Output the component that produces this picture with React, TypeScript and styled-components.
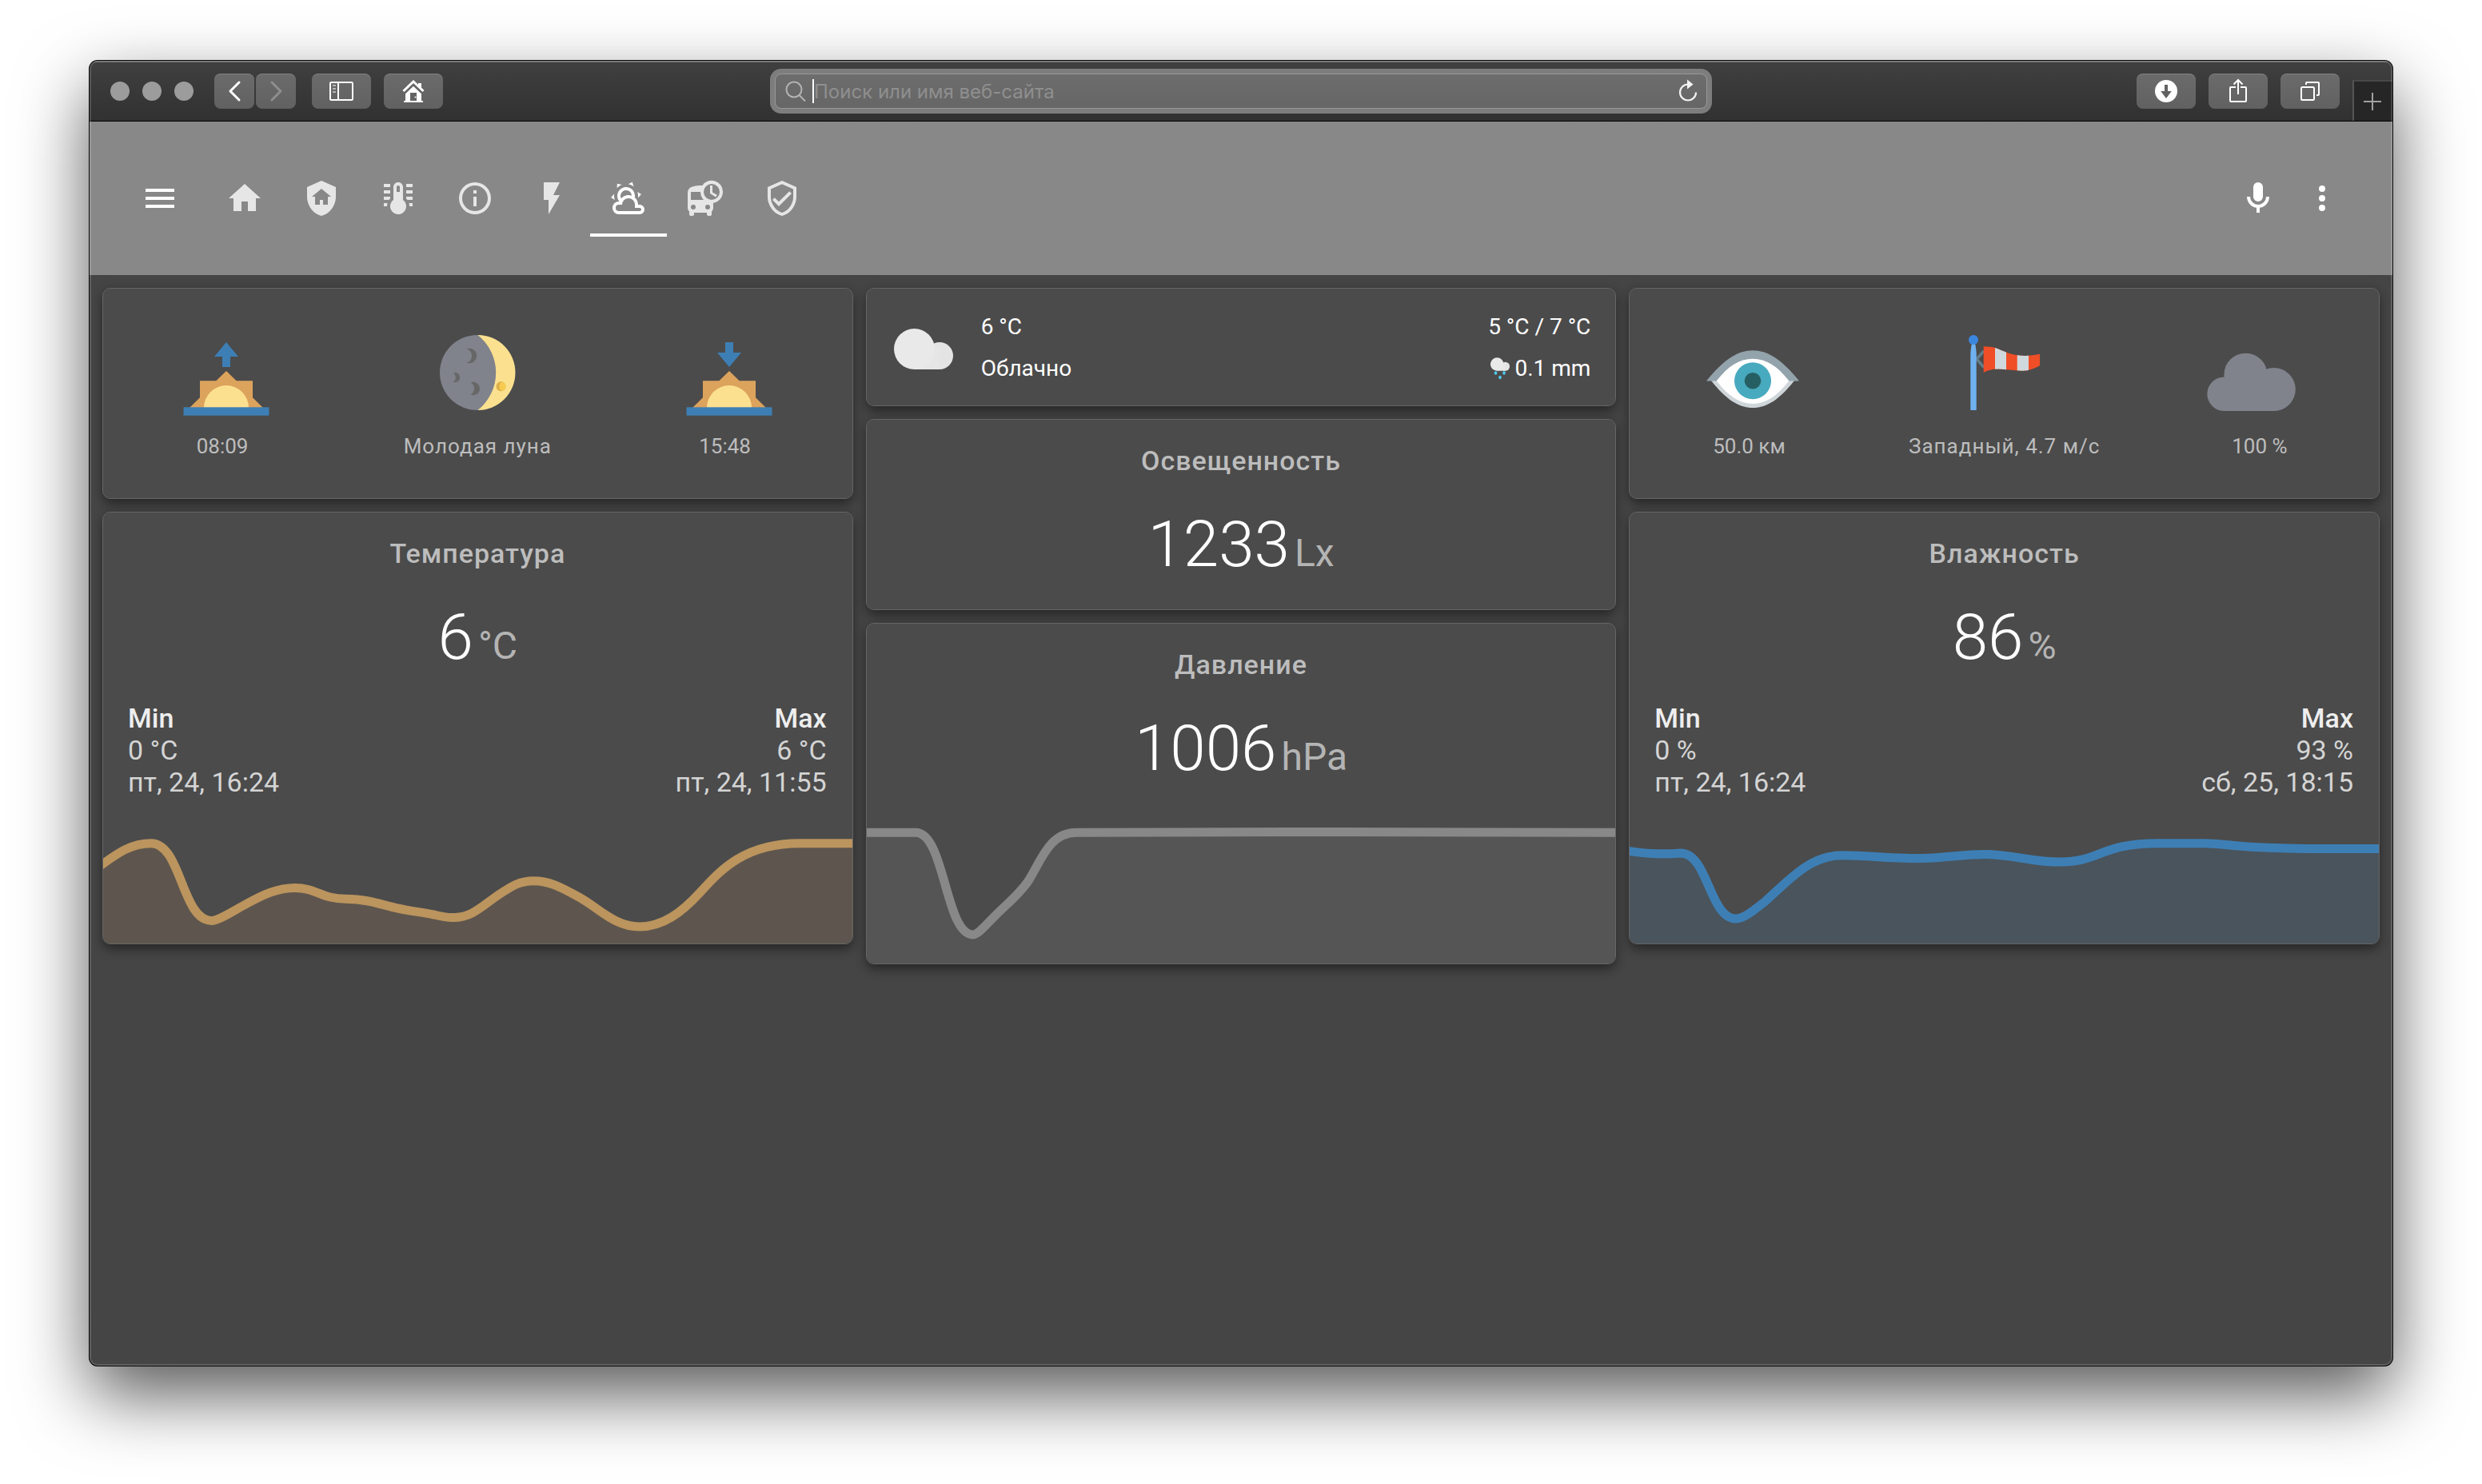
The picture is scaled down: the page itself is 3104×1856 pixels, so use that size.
import React, { useState } from "react";
import styled, { createGlobalStyle } from "styled-components";

const GlobalStyle = createGlobalStyle`
  *, *::before, *::after { box-sizing: border-box; }
  body {
    margin: 0;
    background: #ffffff;
    font-family: Roboto, "Noto Sans", sans-serif;
    -webkit-font-smoothing: antialiased;
  }
  button, input { font: inherit; }
  button { border: 0; padding: 0; background: none; color: inherit; cursor: pointer; }
  svg { display: block; flex: none; }
  h2, p { margin: 0; font: inherit; }
`;

/* ---------- window ---------- */

const Desktop = styled.div`
  min-height: 100vh;
  padding: 76px 112px 148px;
  display: flex;
`;

const BrowserWindow = styled.div`
  position: relative;
  flex: 1;
  min-width: 0;
  display: flex;
  flex-direction: column;
  overflow: hidden;
  border-radius: 10px;
  background: #454545;
  box-shadow: 0 0 0 1px #0a0a0a, 0 36px 88px rgba(0, 0, 0, 0.66);

  &::after {
    content: "";
    position: absolute;
    inset: 0;
    border-radius: inherit;
    box-shadow: inset 0 0 0 2px rgba(255, 255, 255, 0.14);
    pointer-events: none;
  }
`;

const Toolbar = styled.div`
  height: 76px;
  display: grid;
  grid-template-columns: 1fr minmax(0, 1178px) 1fr;
  align-items: center;
  border-bottom: 1px solid #000000;
  background: linear-gradient(#404040, #313131);
  box-shadow: inset 0 2px 0 rgba(255, 255, 255, 0.18);
`;

const ToolGroup = styled.div<{ $end?: boolean }>`
  height: 100%;
  display: flex;
  align-items: center;
  justify-content: ${(p) => (p.$end ? "flex-end" : "flex-start")};
  gap: 16px;
  padding-left: ${(p) => (p.$end ? 0 : 26)}px;
`;

const Lights = styled.div`
  display: flex;
  gap: 16px;
  margin-right: 10px;
`;

const Light = styled.button`
  width: 24px;
  height: 24px;
  border-radius: 50%;
  background: #9c9c9c;
`;

const History = styled.div`
  display: flex;
  gap: 2px;
  margin-right: 4px;
`;

const ToolButton = styled.button<{ $narrow?: boolean }>`
  width: ${(p) => (p.$narrow ? 50 : 74)}px;
  height: 44px;
  border-radius: 8px;
  color: #ffffff;
  background: linear-gradient(#6b6b6b, #616161);
  box-shadow: inset 0 1px 0 rgba(255, 255, 255, 0.16);

  &:disabled { color: #8e8e8e; }
`;

const NewTab = styled.button`
  align-self: flex-end;
  width: 50px;
  height: 51px;
  padding-right: 2px;
  display: grid;
  place-items: center;
  color: #a0a0a0;
  background: #262626;
  border-top: 2px solid #484848;
  border-left: 2px solid #555555;
`;

const AddressRing = styled.div`
  padding: 6px;
  border-radius: 14px;
  background: #7d7d7d;
`;

const AddressBar = styled.label`
  height: 44px;
  display: flex;
  align-items: center;
  gap: 8px;
  padding: 0 9px 0 12px;
  border: 1px solid #989898;
  border-radius: 8px;
  background: linear-gradient(#6d6d6d, #666666);
  color: #b4b4b4;
`;

const AddressText = styled.span`
  flex: 1;
  min-width: 0;
  display: flex;
  align-items: center;
`;

const Caret = styled.span`
  width: 2px;
  height: 30px;
  background: #ffffff;
`;

const AddressInput = styled.input`
  flex: 1;
  min-width: 0;
  padding: 2px 0 0;
  border: 0;
  outline: 0;
  background: none;
  color: #ffffff;
  font-family: Inter, Roboto, sans-serif;
  font-size: 24px;
  line-height: 32px;

  &::placeholder { color: #8f8f8f; opacity: 1; }
`;

const Reload = styled.button`
  color: #f2f2f2;
`;

/* ---------- dashboard header ---------- */

const Header = styled.header`
  display: flex;
  align-items: center;
  padding: 48px 64px;
  background: #888888;
  color: #ffffff;
`;

const IconButton = styled.button`
  width: 48px;
  height: 48px;
`;

const Tabs = styled.nav`
  flex: 1;
  display: flex;
  margin-left: 34px;
`;

const Tab = styled.button<{ $active: boolean }>`
  width: 96px;
  height: 96px;
  display: grid;
  place-items: center;
  color: ${(p) => (p.$active ? "#ffffff" : "#e6e6e6")};
  box-shadow: ${(p) => (p.$active ? "inset 0 -4px 0 #ffffff" : "none")};
`;

const HeaderActions = styled.div`
  display: flex;
  gap: 32px;
`;

/* ---------- cards ---------- */

const Board = styled.main`
  display: grid;
  grid-template-columns: repeat(3, minmax(0, 1fr));
  align-items: start;
  gap: 16px;
  padding: 16px;
`;

const Column = styled.div`
  display: flex;
  flex-direction: column;
  gap: 16px;
`;

const Card = styled.section`
  overflow: hidden;
  border: 1px solid #666666;
  border-radius: 10px;
  background: #4b4b4b;
  background-clip: padding-box;
  box-shadow: 0 8px 14px -2px rgba(0, 0, 0, 0.36), 0 2px 14px rgba(0, 0, 0, 0.18);
`;

const Glance = styled(Card)`
  display: grid;
  grid-template-columns: repeat(3, minmax(0, 1fr));
  column-gap: 6px;
  padding: 41px 0 49px;
`;

const GlanceItem = styled.div`
  display: flex;
  flex-direction: column;
  align-items: center;
  gap: 12px;
`;

const GlanceLabel = styled.p<{ $side: "start" | "center" | "end" }>`
  padding-right: ${(p) => (p.$side === "start" ? 10 : 0)}px;
  padding-left: ${(p) => (p.$side === "end" ? 10 : 0)}px;
  font-size: 26px;
  line-height: 32px;
  letter-spacing: ${(p) => (p.$side === "center" ? 1 : 0)}px;
  color: #bdbdbd;
`;

const Forecast = styled(Card)`
  display: flex;
  align-items: center;
  gap: 32px;
  padding: 22px 31px 20px;
  font-size: 28px;
  line-height: 52px;
  color: #ffffff;
`;

const ForecastText = styled.div<{ $end?: boolean }>`
  flex: ${(p) => (p.$end ? "none" : 1)};
  text-align: ${(p) => (p.$end ? "right" : "left")};
`;

const Rain = styled.p`
  display: flex;
  align-items: center;
  justify-content: flex-end;
  gap: 6px;
`;

const SensorHead = styled.div`
  padding: 31px 0 41px;
  text-align: center;
`;

const SensorName = styled.h2`
  font-size: 34px;
  font-weight: 500;
  line-height: 40px;
  letter-spacing: 1px;
  color: #bdbdbd;
`;

const SensorState = styled.p`
  display: flex;
  justify-content: center;
  align-items: baseline;
  gap: 6px;
  margin-top: 45px;
  font-size: 80px;
  font-weight: 300;
  line-height: 80px;
  color: #ffffff;
`;

const Unit = styled.span`
  font-size: 48px;
  font-weight: 400;
  line-height: 48px;
  color: #b4b4b4;
`;

const Extrema = styled.div`
  display: flex;
  justify-content: space-between;
  padding: 0 32px 2px 31px;
  font-size: 34px;
  line-height: 40px;
  color: #d4d4d4;
`;

const Extremum = styled.div<{ $end?: boolean }>`
  text-align: ${(p) => (p.$end ? "right" : "left")};
`;

const ExtremumName = styled.p`
  font-weight: 500;
  color: #eeeeee;
`;

const ChartSvg = styled.svg`
  width: 100%;
`;

/* ---------- icons ---------- */

const Mdi = ({ d }: { d: string }) => (
  <svg width="48" height="48" viewBox="0 0 24 24" fill="currentColor" fillRule="evenodd" aria-hidden="true">
    <path d={d} />
  </svg>
);

const menuPath = "M3,6H21V8H3V6M3,11H21V13H3V11M3,16H21V18H3V16Z";
const micPath =
  "M12,2A3,3 0 0,1 15,5V11A3,3 0 0,1 12,14A3,3 0 0,1 9,11V5A3,3 0 0,1 12,2M19,11C19,14.53 16.39,17.44 13,17.93V21H11V17.93C7.61,17.44 5,14.53 5,11H7A5,5 0 0,0 12,16A5,5 0 0,0 17,11H19Z";
const dotsPath =
  "M12,16A2,2 0 0,1 14,18A2,2 0 0,1 12,20A2,2 0 0,1 10,18A2,2 0 0,1 12,16M12,10A2,2 0 0,1 14,12A2,2 0 0,1 12,14A2,2 0 0,1 10,12A2,2 0 0,1 12,10M12,4A2,2 0 0,1 14,6A2,2 0 0,1 12,8A2,2 0 0,1 10,6A2,2 0 0,1 12,4Z";

const tabs = [
  { label: "Дом", d: "M10,20V14H14V20H19V12H22L12,3L2,12H5V20H10Z" },
  {
    label: "Охрана",
    d: "M11,13H13V16H16V11H18L12,6L6,11H8V16H11V13M12,1L21,5V11C21,16.55 17.16,21.74 12,23C6.84,21.74 3,16.55 3,11V5L12,1Z",
  },
  {
    label: "Климат",
    d: "M17 3H21V5H17V3M17 7H21V9H17V7M17 11H21V13H17.75L17 12.1V11M21 15V17H19C19 16.31 18.9 15.63 18.71 15H21M3 3H7V5H3V3M3 7H7V9H3V7M3 11H7V12.1L6.25 13H3V11M3 15H5.29C5.1 15.63 5 16.31 5 17H3V15M15 13V5C15 3.34 13.66 2 12 2S9 3.34 9 5V13C6.79 14.66 6.34 17.79 8 20S12.79 22.66 15 21 17.66 16.21 16 14C15.72 13.62 15.38 13.28 15 13M12 4C12.55 4 13 4.45 13 5V8H11V5C11 4.45 11.45 4 12 4Z",
  },
  {
    label: "Информация",
    d: "M11,9H13V7H11V9M12,20C7.59,20 4,16.41 4,12C4,7.59 7.59,4 12,4C16.41,4 20,7.59 20,12C20,16.41 16.41,20 12,20M12,2A10,10 0 0,0 2,12A10,10 0 0,0 12,22A10,10 0 0,0 22,12A10,10 0 0,0 12,2M11,17H13V11H11V17Z",
  },
  { label: "Энергия", d: "M7,2V13H10V22L17,10H13L17,2H7Z" },
  {
    label: "Погода",
    d: "M12.74,5.47C15.1,6.5 16.35,9.03 15.92,11.46C17.19,12.56 18,14.19 18,16V16.17C18.31,16.06 18.65,16 19,16A3,3 0 0,1 22,19A3,3 0 0,1 19,22H6A4,4 0 0,1 2,18A4,4 0 0,1 6,14H6.27C5,12.45 4.6,10.24 5.5,8.26C6.72,5.5 9.97,4.24 12.74,5.47M11.93,7.3C10.16,6.5 8.09,7.31 7.31,9.07C6.85,10.09 6.93,11.22 7.41,12.13C8.5,10.83 10.16,10 12,10C12.7,10 13.38,10.12 14,10.34C13.94,9.06 13.18,7.86 11.93,7.3M13.55,3.64C13,3.4 12.45,3.23 11.88,3.12L14.37,1.82L15.27,4.71C14.76,4.29 14.19,3.93 13.55,3.64M6.09,4.44C5.6,4.79 5.17,5.19 4.8,5.63L4.91,2.82L7.87,3.5C7.25,3.71 6.65,4.03 6.09,4.44M18,9.71C17.91,9.12 17.78,8.55 17.59,8L19.97,9.5L17.92,11.73C18.03,11.08 18.05,10.4 18,9.71M3.04,11.3C3.11,11.9 3.24,12.47 3.43,13L1.06,11.5L3.1,9.28C3,9.93 2.97,10.61 3.04,11.3M19,18H16V16A4,4 0 0,0 12,12A4,4 0 0,0 8,16H6A2,2 0 0,0 4,18A2,2 0 0,0 6,20H19A1,1 0 0,0 20,19A1,1 0 0,0 19,18Z",
  },
  {
    label: "Транспорт",
    d: "M10.2 4C5.6 4 1 4.4 1 8.5V18C1 18.9 1.4 19.7 2 20.2V22C2 22.6 2.4 23 3 23H4C4.6 23 5 22.6 5 22V21H13V22C13 22.6 13.4 23 14 23H15C15.6 23 16 22.6 16 22V20.2C16.6 19.7 17 18.9 17 18V14.9C20.4 14.4 23 11.5 23 8A7 7 0 0 0 10.2 4ZM4.5 19A1.5 1.5 0 1 1 4.5 16A1.5 1.5 0 0 1 4.5 19ZM13.5 19A1.5 1.5 0 1 1 13.5 16A1.5 1.5 0 0 1 13.5 19ZM3 8H9C9 10 9.8 11.7 11 13H3V8ZM16 13A5 5 0 1 1 16 3A5 5 0 0 1 16 13ZM15 4H16.5V8.2L19.4 9.9L18.6 11.2L15 9Z",
  },
  {
    label: "Безопасность",
    d: "M21,11C21,16.55 17.16,21.74 12,23C6.84,21.74 3,16.55 3,11V5L12,1L21,5V11M12,21C15.75,20 19,15.54 19,11.22V6.3L12,3.18L5,6.3V11.22C5,15.54 8.25,20 12,21M10,17L6,13L7.41,11.59L10,14.17L16.59,7.58L18,9L10,17Z",
  },
];

const Chevron = ({ points }: { points: string }) => (
  <svg width="50" height="44" fill="none" stroke="currentColor" strokeWidth="3" strokeLinecap="round" strokeLinejoin="round">
    <polyline points={points} />
  </svg>
);

const SidebarIcon = () => (
  <svg width="74" height="44" fill="none" stroke="#fff" strokeWidth="2">
    <rect x="23" y="11" width="28" height="22" rx="1.5" />
    <path d="M33 11V33" />
    <path d="M26 15H30M26 19H30M26 23H30" stroke="#b5b5b5" />
  </svg>
);

const SafariHomeIcon = () => (
  <svg width="74" height="44" fill="#fff">
    <path d="M37 13.5L47 23.5V34H49V36H25V34H27V23.5Z" />
    <path d="M33 24H41V34H33Z" fill="#626262" />
    <circle cx="39.5" cy="29.5" r="1" />
    <path d="M26 23.5L37 13L48 23.5" fill="none" stroke="#656565" strokeWidth="4" />
    <path d="M43 12H47V19L43 15Z" />
    <path d="M24.5 22L37 10L49.5 22" fill="none" stroke="#fff" strokeWidth="3" />
  </svg>
);

const DownloadIcon = () => (
  <svg width="74" height="44">
    <circle cx="37" cy="22" r="14" fill="#fff" />
    <path d="M35 14H39V22H43.8L37 31L30.2 22H35Z" fill="#626262" />
  </svg>
);

const ShareIcon = () => (
  <svg width="74" height="44" fill="none" stroke="#fff" strokeWidth="2">
    <path d="M34 17H28Q27 17 27 18V34Q27 35 28 35H46Q47 35 47 34V18Q47 17 46 17H40" />
    <path d="M37 26V8M31.5 13.5L37 8L42.5 13.5" />
  </svg>
);

const TabsIcon = () => (
  <svg width="74" height="44" fill="none" stroke="#fff" strokeWidth="2">
    <rect x="26" y="17" width="16" height="16" rx="1.5" />
    <path d="M32 14V12Q32 11 33 11H47Q48 11 48 12V26Q48 27 47 27H45" />
  </svg>
);

const SunIcon = ({ setting }: { setting?: boolean }) => (
  <svg width="128" height="128" aria-hidden="true">
    <path d={setting ? "M59 26H69V39H79L64 57L49 39H59Z" : "M64 26L79 44H69V57H59V44H49Z"} fill="#3d7fb5" />
    <path d="M64 62L76.7 74.3H97V95.3L110 108H18L31 95.3V74.3H51.3Z" fill="#dca35d" />
    <path d="M36 108A28 28 0 0 1 92 108Z" fill="#fbe08f" />
    <rect x="10.5" y="107.3" width="107" height="10.4" fill="#3d7fb5" />
  </svg>
);

const MoonIcon = () => (
  <svg width="128" height="128" aria-hidden="true">
    <circle cx="64" cy="64" r="47" fill="#80838c" />
    <path d="M64.500 17A47 47 0 0 1 64.500 111A60 60 0 0 0 64.500 17Z" fill="#fbe08f" />
    <g fill="#676767">
      <path d="M50.500 34.500A9.200 9.200 0 1 1 50.500 51.500A8.800 8.800 0 0 0 50.500 34.500Z" />
      <path d="M33.800 64.600A6 6 0 1 1 33.800 75.600A6.500 6.500 0 0 0 33.800 64.600Z" />
      <path d="M55.500 76.500A8.200 8.200 0 1 1 55.500 91.500A8.500 8.500 0 0 0 55.500 76.500Z" />
    </g>
    <circle cx="93.500" cy="81.300" r="6" fill="#dfb04a" />
    <ellipse cx="95.500" cy="81.300" rx="4" ry="5.300" fill="#f8cb50" />
  </svg>
);

const EyeIcon = () => (
  <svg width="128" height="128" aria-hidden="true">
    <path d="M12 74C30 97 46 108 64 108S98 97 116 74Z" fill="#cfd6da" />
    <path d="M6 74.500C28 47 46 36.300 64 36.300S100 47 122 74.500Z" fill="#93a3ac" />
    <path d="M18.700 74.300C33 56 47 46.700 64 46.700S95 56 109.300 74.300C95 93 81 103 64 103S33 93 18.700 74.300Z" fill="#fff" />
    <circle cx="64" cy="74.300" r="23" fill="#48aabf" />
    <circle cx="64" cy="74.300" r="10.300" fill="#265f63" />
  </svg>
);

const windsockPath =
  "M37.700 31.300Q47 31.300 52 33C62 36.500 68 40.500 79.700 42.300Q94 44 108 40.700V55.300Q97 61.700 86 61.700Q80 61.700 66 60.300Q48 57.500 37.700 64Z";

const WindsockIcon = () => (
  <svg width="128" height="128" aria-hidden="true">
    <clipPath id="windsock"><path d={windsockPath} /></clipPath>
    <path d="M38 37L29 47L38 57.500" fill="none" stroke="#637d8b" strokeWidth="3.500" />
    <path d={windsockPath} fill="#f04e27" />
    <path d="M52 28H66V68H52ZM79.700 28H94V68H79.700Z" fill="#cfd8dc" clipPath="url(#windsock)" />
    <path d="M23 27H27Q28.700 36 28.700 42V111H21.300V42Q21.300 36 23 27Z" fill="#70b2f0" />
    <circle cx="25" cy="23" r="6" fill="#3b87df" />
  </svg>
);

const CloudCoverIcon = () => (
  <svg width="128" height="128" fill="#80838c" aria-hidden="true">
    <circle cx="51.400" cy="66.700" r="27" />
    <circle cx="24.600" cy="90.700" r="21.300" />
    <circle cx="86.800" cy="85" r="27" />
    <path d="M24.600 70H86.800V112H24.600Z" />
  </svg>
);

const CloudShape = () => (
  <>
    <circle cx="60" cy="50" r="17" fill="#e4e4e4" />
    <path d="M28.500 41H60V67H28.500Z" fill="#e6e6e6" />
    <circle cx="28.500" cy="41.500" r="25.500" fill="#e9e9e9" />
  </>
);

const CloudyIcon = () => (
  <svg width="80" height="80" viewBox="0 0 80 80" aria-hidden="true">
    <CloudShape />
  </svg>
);

const RainIcon = () => (
  <svg width="24" height="28" viewBox="0 0 24 28" aria-hidden="true">
    <g transform="translate(-1 -5) scale(0.325)"><CloudShape /></g>
    <g fill="#4fc9ec">
      <ellipse cx="6.500" cy="19.500" rx="1.800" ry="2.200" />
      <ellipse cx="17" cy="19.500" rx="1.800" ry="2.200" />
      <ellipse cx="12" cy="25" rx="1.800" ry="2.200" />
    </g>
  </svg>
);

/* ---------- charts ---------- */

type ChartProps = { line: string; height: number; stroke: string; fill: string };

const Chart = ({ line, height, stroke, fill }: ChartProps) => (
  <ChartSvg viewBox={`0 0 937 ${height}`} height={height} preserveAspectRatio="none" aria-hidden="true">
    <path d={`${line}V${height}H0Z`} fill={fill} />
    <path d={line} fill="none" stroke={stroke} strokeWidth="11" vectorEffect="non-scaling-stroke" />
  </ChartSvg>
);

const temperatureLine =
  "M-4 83C17 68 34 54.700 60 54.700C98 54.700 98 151.500 136 151.500C144 151.500 158 142 180 130C200 119 218 110.400 240 110.400C266 110.400 274 124.300 303 124.300C335 125 345 131 371 136.500C384 139.500 400 141 414 144C426 147 432 148 440 147.400C462 147 474 133 496 118.300C513 107 522 101.700 538.500 101.700C560 101.700 575 111 596 122.300C622 137 640 159 671 159C700 159 724 141 746 117C770 91 800 54.700 871 54.700H941";

const pressureLine =
  "M-4 24.300H61C98 24.300 98 152 133 152C140 152 152 136 166 123C176 113 190 102 202 85C218 60 228 24.300 262 24.300C350 24.300 430 23.500 523 23.500C650 23.500 760 24.300 941 24.300";

const humidityLine =
  "M-4 64C12 66 30 69.500 64 67C98 67 100 149 133 149C143 149 156 138 170 127C200 100 226 69.700 266 69.700C300 69.700 320 73.500 364 73.500C398 73 416 68.500 444 68.500C480 68.500 500 78 538 78C590 78 588 54.700 662 54.700H719C745 54.700 760 61.400 850 61.400H941";

/* ---------- composed cards ---------- */

type Stat = { value: string; date: string };

type SensorProps = {
  name: string;
  value: string;
  unit: string;
  min?: Stat;
  max?: Stat;
  chart?: ChartProps;
};

const SensorCard = ({ name, value, unit, min, max, chart }: SensorProps) => (
  <Card>
    <SensorHead>
      <SensorName>{name}</SensorName>
      <SensorState>
        {value}
        <Unit>{unit}</Unit>
      </SensorState>
    </SensorHead>
    {min && max && (
      <Extrema>
        <Extremum>
          <ExtremumName>Min</ExtremumName>
          <p>{min.value}</p>
          <p>{min.date}</p>
        </Extremum>
        <Extremum $end>
          <ExtremumName>Max</ExtremumName>
          <p>{max.value}</p>
          <p>{max.date}</p>
        </Extremum>
      </Extrema>
    )}
    {chart && <Chart {...chart} />}
  </Card>
);

export default function App() {
  const [active, setActive] = useState(5);
  const [address, setAddress] = useState("");

  return (
    <>
      <GlobalStyle />
      <Desktop>
        <BrowserWindow>
          <Toolbar>
            <ToolGroup>
              <Lights>
                <Light aria-label="Закрыть" />
                <Light aria-label="Свернуть" />
                <Light aria-label="Развернуть" />
              </Lights>
              <History>
                <ToolButton $narrow aria-label="Назад"><Chevron points="31,11 20,22 31,33" /></ToolButton>
                <ToolButton $narrow disabled aria-label="Вперёд"><Chevron points="20,11 31,22 20,33" /></ToolButton>
              </History>
              <ToolButton aria-label="Боковое меню"><SidebarIcon /></ToolButton>
              <ToolButton aria-label="Домашняя страница"><SafariHomeIcon /></ToolButton>
            </ToolGroup>
            <AddressRing>
              <AddressBar>
                <svg width="26" height="28" fill="none" stroke="currentColor" strokeWidth="2">
                  <circle cx="11" cy="12" r="9.500" />
                  <path d="M17.500 19L25 26.500" />
                </svg>
                <AddressText>
                  <Caret />
                  <AddressInput
                    aria-label="Адрес"
                    placeholder="Поиск или имя веб-сайта"
                    value={address}
                    onChange={(e) => setAddress(e.target.value)}
                  />
                </AddressText>
                <Reload aria-label="Обновить">
                  <svg width="28" height="32" fill="none">
                    <path d="M14 7.500A10 10 0 1 0 24 17.500" stroke="currentColor" strokeWidth="2.200" />
                    <path d="M13 1.500L20.500 7.500L13 13.500Z" fill="currentColor" />
                  </svg>
                </Reload>
              </AddressBar>
            </AddressRing>
            <ToolGroup $end>
              <ToolButton aria-label="Загрузки"><DownloadIcon /></ToolButton>
              <ToolButton aria-label="Поделиться"><ShareIcon /></ToolButton>
              <ToolButton aria-label="Все вкладки"><TabsIcon /></ToolButton>
              <NewTab aria-label="Новая вкладка">
                <svg width="22" height="22" stroke="currentColor" strokeWidth="2"><path d="M11 0V22M0 11H22" /></svg>
              </NewTab>
            </ToolGroup>
          </Toolbar>

          <Header>
            <IconButton aria-label="Меню"><Mdi d={menuPath} /></IconButton>
            <Tabs>
              {tabs.map((tab, i) => (
                <Tab key={tab.label} $active={i === active} aria-label={tab.label} onClick={() => setActive(i)}>
                  <Mdi d={tab.d} />
                </Tab>
              ))}
            </Tabs>
            <HeaderActions>
              <IconButton aria-label="Голосовой ввод"><Mdi d={micPath} /></IconButton>
              <IconButton aria-label="Ещё"><Mdi d={dotsPath} /></IconButton>
            </HeaderActions>
          </Header>

          <Board>
            <Column>
              <Glance>
                <GlanceItem><SunIcon /><GlanceLabel $side="start">08:09</GlanceLabel></GlanceItem>
                <GlanceItem><MoonIcon /><GlanceLabel $side="center">Молодая луна</GlanceLabel></GlanceItem>
                <GlanceItem><SunIcon setting /><GlanceLabel $side="start">15:48</GlanceLabel></GlanceItem>
              </Glance>
              <SensorCard
                name="Температура"
                value="6"
                unit="°C"
                min={{ value: "0 °C", date: "пт, 24, 16:24" }}
                max={{ value: "6 °C", date: "пт, 24, 11:55" }}
                chart={{ line: temperatureLine, height: 180, stroke: "#bb945e", fill: "#5e564e" }}
              />
            </Column>

            <Column>
              <Forecast>
                <CloudyIcon />
                <ForecastText>
                  <p>6 °C</p>
                  <p>Облачно</p>
                </ForecastText>
                <ForecastText $end>
                  <p>5 °C / 7 °C</p>
                  <Rain><RainIcon />0.1 mm</Rain>
                </ForecastText>
              </Forecast>
              <SensorCard name="Освещенность" value="1233" unit="Lx" />
              <SensorCard
                name="Давление"
                value="1006"
                unit="hPa"
                chart={{ line: pressureLine, height: 188, stroke: "#888888", fill: "#555555" }}
              />
            </Column>

            <Column>
              <Glance>
                <GlanceItem><EyeIcon /><GlanceLabel $side="start">50.0 км</GlanceLabel></GlanceItem>
                <GlanceItem><WindsockIcon /><GlanceLabel $side="center">Западный, 4.7 м/с</GlanceLabel></GlanceItem>
                <GlanceItem><CloudCoverIcon /><GlanceLabel $side="end">100 %</GlanceLabel></GlanceItem>
              </Glance>
              <SensorCard
                name="Влажность"
                value="86"
                unit="%"
                min={{ value: "0 %", date: "пт, 24, 16:24" }}
                max={{ value: "93 %", date: "сб, 25, 18:15" }}
                chart={{ line: humidityLine, height: 180, stroke: "#3d7fb5", fill: "#4a545c" }}
              />
            </Column>
          </Board>
        </BrowserWindow>
      </Desktop>
    </>
  );
}
